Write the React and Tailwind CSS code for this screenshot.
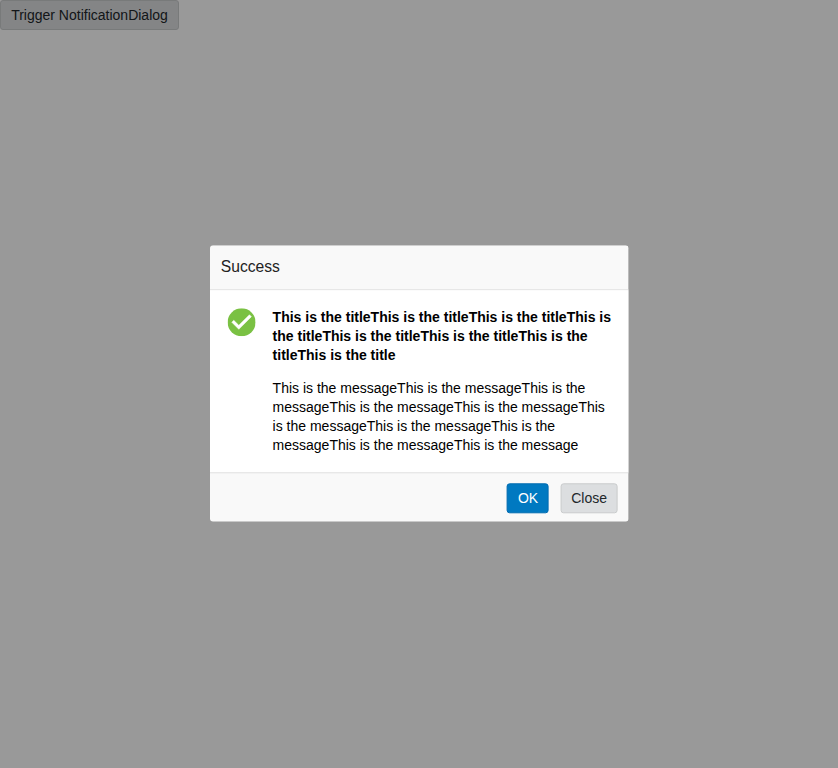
export default function App() {
  return (
    <div className="relative h-[768px] w-full bg-white font-['Liberation_Sans',Arial,sans-serif] text-[14px] leading-[19px] text-black">
      <button className="block h-[30px] w-[179px] whitespace-nowrap rounded-[3px] border border-[#c9cbcc] bg-[#dcdee0] text-center text-[#22272b]">
        Trigger NotificationDialog
      </button>
      <div className="absolute inset-0 bg-black/40" />
      <div className="absolute left-[210px] top-[245px] flex h-[276.5px] w-[419px] [transform:translate(-0.4px,0.3px)] flex-col rounded-[3px] bg-[#f9f9f9] [clip-path:inset(0_0_0.3px_0.4px_round_3px)]">
        <header className="h-[45px] border-b border-[#e0e0e0] px-[11.2px] pt-[11px] text-[15.65px] leading-[22px] text-[#222]">
          Success
        </header>
        <div className="flex flex-1 bg-white pl-[18px] pt-[18px]">
          <svg className="size-7 shrink-0" viewBox="2 2 20 20">
            <circle cx="12" cy="12" r="10" fill="#7ac143" />
            <path d="M10 17l-5-5 1.41-1.41L10 14.17l7.59-7.59L19 8l-9 9z" fill="#fff" stroke="#fff" strokeWidth="0.35" />
          </svg>
          <div className="ml-[17px] w-[340px]">
            <p className="font-bold">This is the titleThis is the titleThis is the titleThis is the titleThis is the titleThis is the titleThis is the titleThis is the title</p>
            <p className="mt-[14px]">This is the messageThis is the messageThis is the messageThis is the messageThis is the messageThis is the messageThis is the messageThis is the messageThis is the messageThis is the message</p>
          </div>
        </div>
        <footer className="flex h-[49.5px] justify-end gap-3 border-t border-[#e0e0e0] px-[11px] pt-[10px]">
          <button className="h-[30px] w-[42px] rounded-[3px] border border-[#006bb0] bg-[#0079c1] pl-px text-white">OK</button>
          <button className="h-[30px] w-[57px] rounded-[3px] border border-[#c9cbcc] bg-[#dcdee0] text-[#22272b]">Close</button>
        </footer>
      </div>
    </div>
  );
}
